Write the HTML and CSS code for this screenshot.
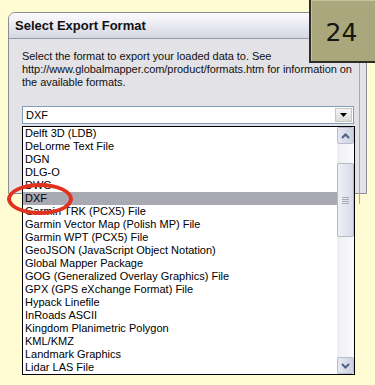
FILE: index.html
```html
<!DOCTYPE html>
<html lang="en">
<head>
  <meta charset="UTF-8">
  <title>Select Export Format</title>
  <link rel="stylesheet" href="styles.css">
</head>
<body>

  <div class="badge">24</div>

  <div class="dialog">
    <div class="titlebar">Select Export Format</div>
    <div class="content">
      <p class="info">
        Select the format to export your loaded data to. See<br>
        http://www.globalmapper.com/product/formats.htm for information on<br>
        the available formats.
      </p>

      <div class="combo">
        <span class="combo-value">DXF</span>
        <span class="combo-btn">
          <svg width="7" height="4" viewBox="0 0 7 4"><path d="M0 0h7L3.5 4z" fill="#000"/></svg>
        </span>

        <!-- lista desplegada -->
        <div class="dropdown">
          <ul class="items">
            <li>Delft 3D (LDB)</li>
            <li>DeLorme Text File</li>
            <li>DGN</li>
            <li>DLG-O</li>
            <li>DWG</li>
            <li class="selected">DXF</li>
            <li>Garmin TRK (PCX5) File</li>
            <li>Garmin Vector Map (Polish MP) File</li>
            <li>Garmin WPT (PCX5) File</li>
            <li>GeoJSON (JavaScript Object Notation)</li>
            <li>Global Mapper Package</li>
            <li>GOG (Generalized Overlay Graphics) File</li>
            <li>GPX (GPS eXchange Format) File</li>
            <li>Hypack Linefile</li>
            <li>InRoads ASCII</li>
            <li>Kingdom Planimetric Polygon</li>
            <li>KML/KMZ</li>
            <li>Landmark Graphics</li>
            <li>Lidar LAS File</li>
          </ul>
          <div class="scrollbar">
            <div class="sb-btn">
              <svg width="9" height="6" viewBox="0 0 9 6"><path d="M1 5l3.5-3.5L8 5" fill="none" stroke="#4d6185" stroke-width="2"/></svg>
            </div>
            <div class="sb-track">
              <div class="sb-thumb"><span class="grip"></span></div>
            </div>
            <div class="sb-btn">
              <svg width="9" height="6" viewBox="0 0 9 6"><path d="M1 1l3.5 3.5L8 1" fill="none" stroke="#4d6185" stroke-width="2"/></svg>
            </div>
          </div>
        </div>
      </div>
    </div>
  </div>

  <div class="circle"></div>

</body>
</html>
```

FILE: styles.css
```css
body {
  margin: 0;
  width: 375px;
  height: 385px;
  overflow: hidden;
  background: #fffbd2;
  font-family: "Liberation Sans", Arial, sans-serif;
  position: relative;
}

.dialog {
  margin: 12px 0 0 8px;
  width: 357px;
  height: 180px;
  border: 1px solid #8c8c94;
  border-top-left-radius: 7px;
  background: #e2e2e7;
}

.titlebar {
  height: 25px;
  line-height: 25px;
  padding-left: 6px;
  font-size: 13px;
  font-weight: bold;
  color: #111;
  border-top-left-radius: 6px;
  background: linear-gradient(to bottom, #fbfbfd 0%, #e9e9f2 50%, #d6d6e0 100%);
  border-bottom: 1px solid #9a9aa4;
}

.content {
  margin-right: 6px;
  height: 154px;
  border-right: 1px solid #a8a8b0;
  padding: 11px 0 0 13px;
}

.info {
  margin: 0;
  font-size: 11px;
  line-height: 13px;
  color: #111;
  letter-spacing: -0.05px;
}

.combo {
  position: relative;
  margin-top: 17px;
  width: 330px;
  height: 16px;
  background: #fff;
  border: 1px solid #7f9db9;
  display: flex;
  align-items: center;
  justify-content: space-between;
}

.combo-value {
  font-size: 11px;
  padding-left: 3px;
}

.combo-btn {
  width: 17px;
  height: 14px;
  margin-right: 1px;
  background: linear-gradient(to bottom, #f4f4f4, #dcdcdc);
  border: 1px solid #c6c6c6;
  box-sizing: border-box;
  display: flex;
  align-items: center;
  justify-content: center;
}

.dropdown {
  position: absolute;
  top: 19px;
  left: -1px;
  width: 331px;
  height: 247px;
  background: #fff;
  border: 1px solid #000;
  display: flex;
  z-index: 2;
}

.items {
  list-style: none;
  margin: 0;
  padding: 0;
  flex: 1;
}

.items li {
  height: 13px;
  line-height: 13px;
  font-size: 11px;
  padding-left: 2px;
  color: #000;
  white-space: nowrap;
}

.items li.selected {
  background: #a9a9b3;
}

.scrollbar {
  width: 17px;
  display: flex;
  flex-direction: column;
  background: linear-gradient(to right, #eeeef4, #fbfbfd);
}

.sb-btn {
  height: 17px;
  box-sizing: border-box;
  border: 1px solid #b9bccc;
  border-radius: 2px;
  background: linear-gradient(to right, #e6e8f2, #cdd1e0);
  display: flex;
  align-items: center;
  justify-content: center;
}

.sb-track {
  flex: 1;
  padding-top: 19px;
}

.sb-thumb {
  height: 74px;
  box-sizing: border-box;
  border: 1px solid #b4b8c8;
  border-radius: 2px;
  background: linear-gradient(to right, #eef0f6, #d9dce8);
  display: flex;
  align-items: center;
  justify-content: center;
}

.grip {
  width: 7px;
  height: 7px;
  background: repeating-linear-gradient(to bottom, #a7abbd 0 1px, transparent 1px 2px);
}

.badge {
  position: absolute;
  top: -2px;
  left: 309px;
  width: 70px;
  height: 65px;
  box-sizing: border-box;
  background: #a9a77b;
  border: 2px solid #2e2e26;
  box-shadow: inset 1px 1px 0 #c7c49c;
  font-family: "DejaVu Sans", sans-serif;
  font-size: 25px;
  color: #161610;
  display: flex;
  align-items: center;
  justify-content: center;
  padding: 4px 5px 0 0;
  z-index: 3;
}

.circle {
  position: absolute;
  left: 7px;
  top: 183px;
  width: 58px;
  height: 24px;
  border: 4px solid #e0321f;
  border-radius: 50%;
  z-index: 4;
}
```
